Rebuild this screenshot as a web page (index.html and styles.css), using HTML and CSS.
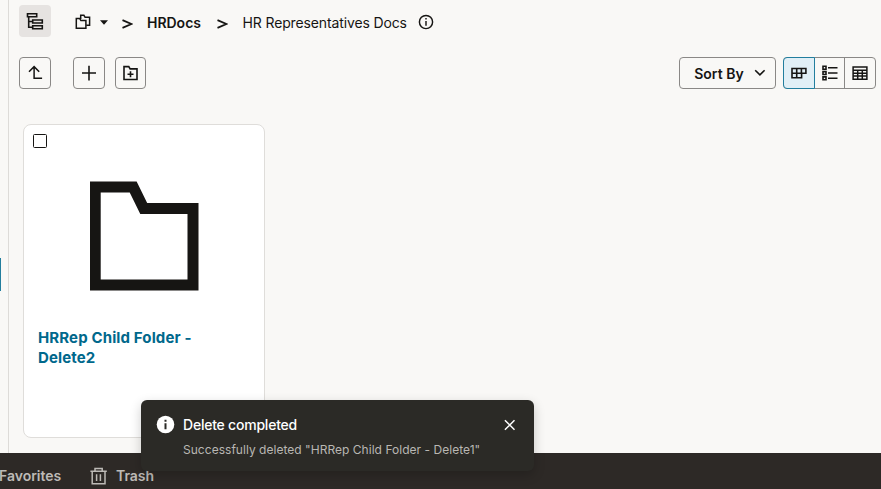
FILE: index.html
```html
<!DOCTYPE html>
<html lang="en">
<head>
<meta charset="utf-8">
<title>HR Representatives Docs</title>
<link rel="stylesheet" href="styles.css">
</head>
<body>
<div class="app">
  <div class="workspace">
    <aside class="rail"><span class="rail-handle"></span></aside>
    <main class="content">
      <nav class="breadcrumb">
        <button class="tree-toggle" aria-label="Folder tree">
          <svg width="32" height="32" viewBox="0 0 32 32" fill="none" stroke="currentColor" stroke-width="1.6"><path d="M8.5 8.8h9.2v3H8.5zM13.7 15h9.6v3h-9.6zM13.7 20.7h9.6v3h-9.6zM9.7 12v10.3h4M9.7 16.5h4"/></svg>
        </button>
        <button class="root-picker" aria-label="Libraries">
          <svg width="16" height="16" viewBox="0 0 16 16" fill="none" stroke="currentColor" stroke-width="1.5"><path d="M5.7 5V1.3h3.2l1.2 2h4.5v8h-3.4"/><path d="M1.3 4.4h3.3l1.3 2.2h5v7.6H1.3z"/></svg>
          <svg class="caret" width="8" height="5" viewBox="0 0 8 5"><path d="M0 .3h8L4 4.7z" fill="currentColor"/></svg>
        </button>
        <svg class="sep" width="11" height="10" viewBox="0 0 11 10" fill="none" stroke="currentColor" stroke-width="1.7"><path d="M.5 1.1 9.4 5 .5 8.9"/></svg>
        <a class="crumb-parent">HRDocs</a>
        <svg class="sep sep-last" width="11" height="10" viewBox="0 0 11 10" fill="none" stroke="currentColor" stroke-width="1.7"><path d="M.5 1.1 9.4 5 .5 8.9"/></svg>
        <span class="crumb-current">HR Representatives Docs</span>
        <svg class="info" width="16" height="16" viewBox="0 0 16 16" fill="none" stroke="currentColor" stroke-width="1.45"><circle cx="8" cy="8" r="6.6"/><path d="M8 6.9v4.9M8 4v1.6"/></svg>
      </nav>
      <div class="toolbar">
        <button class="btn" aria-label="Up"><svg width="18" height="18" viewBox="0 0 18 18" fill="none" stroke="currentColor" stroke-width="1.5"><path d="M3 7.7 8.1 2.6l5.1 5.1M8.1 3v11.3h8"/></svg></button>
        <button class="btn btn-add" aria-label="Add"><svg width="18" height="18" viewBox="0 0 18 18" fill="none" stroke="currentColor" stroke-width="1.6"><path d="M2 9h14M9 1.8v14.6"/></svg></button>
        <button class="btn btn-folder" aria-label="New folder"><svg width="18" height="18" viewBox="0 0 18 18" fill="none" stroke="currentColor" stroke-width="1.6"><path d="M2 2.6h4.8l1.3 2.3H15v10.6H2zM8.5 7.2v6M5.5 10.2h6"/></svg></button>
        <button class="btn sort">Sort By<svg width="12" height="8" viewBox="0 0 12 8" fill="none" stroke="currentColor" stroke-width="1.6"><path d="m1.2 1.2 4.7 4.7 4.7-4.7"/></svg></button>
        <div class="views">
          <button class="view selected" aria-label="Grid"><svg width="18" height="18" viewBox="0 0 18 18" fill="none" stroke="currentColor" stroke-width="1.6"><path d="M2 4.5h13.9v4.7h-4.3v4.6H2zM6.7 4.5v9.3M11.4 4.5v4.7M2 9.2h9.6"/></svg></button>
          <button class="view" aria-label="List"><svg width="18" height="18" viewBox="0 0 18 18" fill="none" stroke="currentColor" stroke-width="1.6"><path d="M2 2.3h3v2.9H2zM2 7.6h3v2.9H2zM2 12.9h3v2.9H2zM7 3.8h9.5M7 9h9.5M7 14.3h9.5"/></svg></button>
          <button class="view" aria-label="Table"><svg width="18" height="18" viewBox="0 0 18 18" fill="none" stroke="currentColor" stroke-width="1.5"><path d="M2.1 3h13.8v12.2H2.1zM2.1 6.2h13.8M2.1 9.2h13.8M2.1 12.1h13.8M6.7 6.4v8.5M11.3 6.4v8.5"/></svg></button>
        </div>
      </div>
      <article class="card">
        <span class="check" role="checkbox" aria-checked="false"></span>
        <svg class="folder" width="109" height="110" viewBox="0 0 109 110" fill="none" stroke="#161513" stroke-width="11"><path d="M5.2 6h38l10.5 21.5h49.3v76.4H5.2z"/></svg>
        <a class="card-title">HRRep Child Folder -<br><span>Delete2</span></a>
      </article>
    </main>
  </div>
  <footer class="bottom-bar">
    <a class="nav-fav">Favorites</a>
    <svg class="trash" width="18" height="20" viewBox="0 0 18 20" fill="none" stroke="currentColor" stroke-width="1.5"><path d="M.4 5.2h16.4M5 5.2V2.4h7.2v2.8M2.2 5.2v12.6h12.8V5.2M6.6 8.2v6.8M10.4 8.2v6.8"/></svg>
    <a class="nav-trash">Trash</a>
  </footer>
  <div class="toast" role="status">
    <svg class="toast-icon" width="18" height="18" viewBox="0 0 18 18"><circle cx="8.5" cy="8.5" r="8.8" fill="#fff"/><path d="M8.5 7.2v6M8.5 3.8v2" stroke="#2b2a26" stroke-width="2"/></svg>
    <div class="toast-body">
      <div class="toast-title">Delete completed</div>
      <div class="toast-text">Successfully deleted "HRRep Child Folder - Delete1"</div>
    </div>
    <svg class="close" width="12" height="12" viewBox="0 0 12 12" fill="none" stroke="#fff" stroke-width="1.5"><path d="m.9 1.2 9.6 9.6M10.5 1.2.9 10.8"/></svg>
  </div>
</div>
</body>
</html>
```
FILE: styles.css
```css
* { box-sizing: border-box; }
body { margin: 0; font-family: Inter, "Liberation Sans", sans-serif; color: #161513; }
svg { display: block; flex: none; }
button { padding: 0; border: 0; background: none; color: inherit; font: inherit; }
.app { position: relative; display: flex; flex-direction: column; width: 881px; height: 489px; overflow: hidden; background: #f9f8f6; }
.workspace { display: flex; height: 453px; }
.rail { width: 9px; border-right: 1px solid #dddbd8; padding-top: 258px; }
.rail-handle { display: block; width: 1px; height: 33px; background: #227e9e; }
.content { flex: 1; padding: 5px 5px 0 10px; }

.breadcrumb { display: flex; align-items: center; height: 32px; white-space: nowrap; }
.tree-toggle { width: 32px; height: 32px; border-radius: 4px; background: #e6e3e1; }
.root-picker { display: flex; align-items: center; margin: 2px 0 0 24px; }
.caret { margin: 0 0 0 9px; }
.sep { margin: 5px 0 0 14px; }
.crumb-parent { margin: 3px 0 0 14px; width: 70px; font-size: 14px; font-weight: 600; letter-spacing: -0.02px; }
.sep-last { margin-left: 0; }
.crumb-current { margin: 3px 0 0 14.5px; width: 175px; font-size: 14px; letter-spacing: -0.13px; }
.info { margin-top: 2px; }

.toolbar { display: flex; height: 32px; margin-top: 20px; }
.btn { display: flex; align-items: center; justify-content: center; width: 32px; height: 32px; border: 1px solid #8a8886; border-radius: 4px; }
.btn-add { margin-left: 22px; }
.btn-folder { margin-left: 10px; width: 31px; }
.sort { width: 97px; margin-left: auto; font-size: 14px; font-weight: 600; letter-spacing: 0.05px; gap: 10px; padding: 1px 0 0 5px; }
.sort svg { margin-top: -1px; }
.views { display: flex; width: 93px; margin-left: 7px; border: 1px solid #8a8886; border-radius: 4px; }
.view { display: flex; align-items: center; justify-content: center; flex: 1; }
.view + .view { border-left: 1px solid #8a8886; }
.view.selected { flex: 0 0 32px; margin: -1px 0 -1px -1px; border: 1px solid #227e9e; border-radius: 4px 0 0 4px; background: #e1eff6; }
.view.selected + .view { flex: 0 0 29px; border-left: 0; }

.card { display: flex; flex-direction: column; width: 242px; height: 314px; margin: 35px 0 0 4px; padding: 9px 14px; border: 1px solid #dfddda; border-radius: 8px; background: #fff; }
.check { width: 14px; height: 14px; margin-left: -5px; border: 1.4px solid #161513; border-radius: 1.5px; }
.folder { margin: 33px 0 0 52px; }
.card-title { margin-top: 37px; font-size: 15px; font-weight: 700; line-height: 20px; letter-spacing: 0.13px; color: #00688c; white-space: nowrap; }

.bottom-bar { display: flex; align-items: center; height: 36px; padding-top: 10px; background: #2d2926; color: #bdbab6; font-size: 14px; font-weight: 600; }
.nav-fav { width: 90px; margin: -2px 0 0 -1px; letter-spacing: -0.03px; }
.trash { margin-left: 1px; }
.nav-trash { margin: -2px 0 0 8px; letter-spacing: -0.03px; }

.toast { position: absolute; left: 141px; top: 400px; display: flex; width: 393px; height: 71px; padding: 16px; border-radius: 6px; background: #2b2a26; box-shadow: 0 4px 12px rgba(0,0,0,.2); white-space: nowrap; }
.toast-icon { overflow: visible; }
.toast-body { width: 321px; margin-left: 8px; }
.toast-title { font-size: 14px; line-height: 18px; letter-spacing: -0.22px; color: #fff; font-weight: 500; }
.toast-text { margin-top: 7px; font-size: 12px; line-height: 18px; letter-spacing: 0.03px; color: #b9b7b3; }
.close { margin-top: 3px; }
```
